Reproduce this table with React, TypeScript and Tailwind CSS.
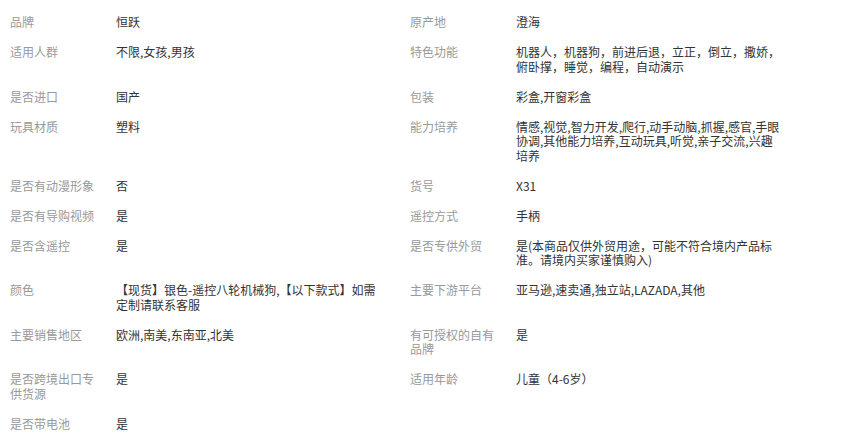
const rows: [string, string, string, string][] = [
  ["品牌", "恒跃", "原产地", "澄海"],
  ["适用人群", "不限,女孩,男孩", "特色功能", "机器人，机器狗，前进后退，立正，倒立，撒娇，俯卧撑，睡觉，编程，自动演示"],
  ["是否进口", "国产", "包装", "彩盒,开窗彩盒"],
  ["玩具材质", "塑料", "能力培养", "情感,视觉,智力开发,爬行,动手动脑,抓握,感官,手眼协调,其他能力培养,互动玩具,听觉,亲子交流,兴趣培养"],
  ["是否有动漫形象", "否", "货号", "X31"],
  ["是否有导购视频", "是", "遥控方式", "手柄"],
  ["是否含遥控", "是", "是否专供外贸", "是(本商品仅供外贸用途，可能不符合境内产品标准。请境内买家谨慎购入)"],
  ["颜色", "【现货】银色-遥控八轮机械狗,【以下款式】如需定制请联系客服", "主要下游平台", "亚马逊,速卖通,独立站,LAZADA,其他"],
  ["主要销售地区", "欧洲,南美,东南亚,北美", "有可授权的自有品牌", "是"],
  ["是否跨境出口专供货源", "是", "适用年龄", "儿童（4-6岁）"],
  ["是否带电池", "是", "", ""],
];

function Cell({ label, value }: { label: string; value: string }) {
  return (
    <div className="flex pl-[10px] pt-[8px] pb-[7.5px]">
      <div className="w-[106px] shrink-0 pr-[12px] text-[#999]">{label}</div>
      <div className="w-[268px] text-[#333]">{value}</div>
    </div>
  );
}

export default function App() {
  return (
    <div
      className="min-h-[442px] bg-white pt-[7px] text-[12px] leading-[14.5px]"
      style={{ fontFamily: '"Noto Sans CJK SC", "Noto Sans", sans-serif' }}
    >
      <div className="grid w-[800px] grid-cols-2">
        {rows.map(([l1, v1, l2, v2], i) => (
          <div key={i} className="contents">
            <Cell label={l1} value={v1} />
            {l2 ? <Cell label={l2} value={v2} /> : <div />}
          </div>
        ))}
      </div>
    </div>
  );
}
